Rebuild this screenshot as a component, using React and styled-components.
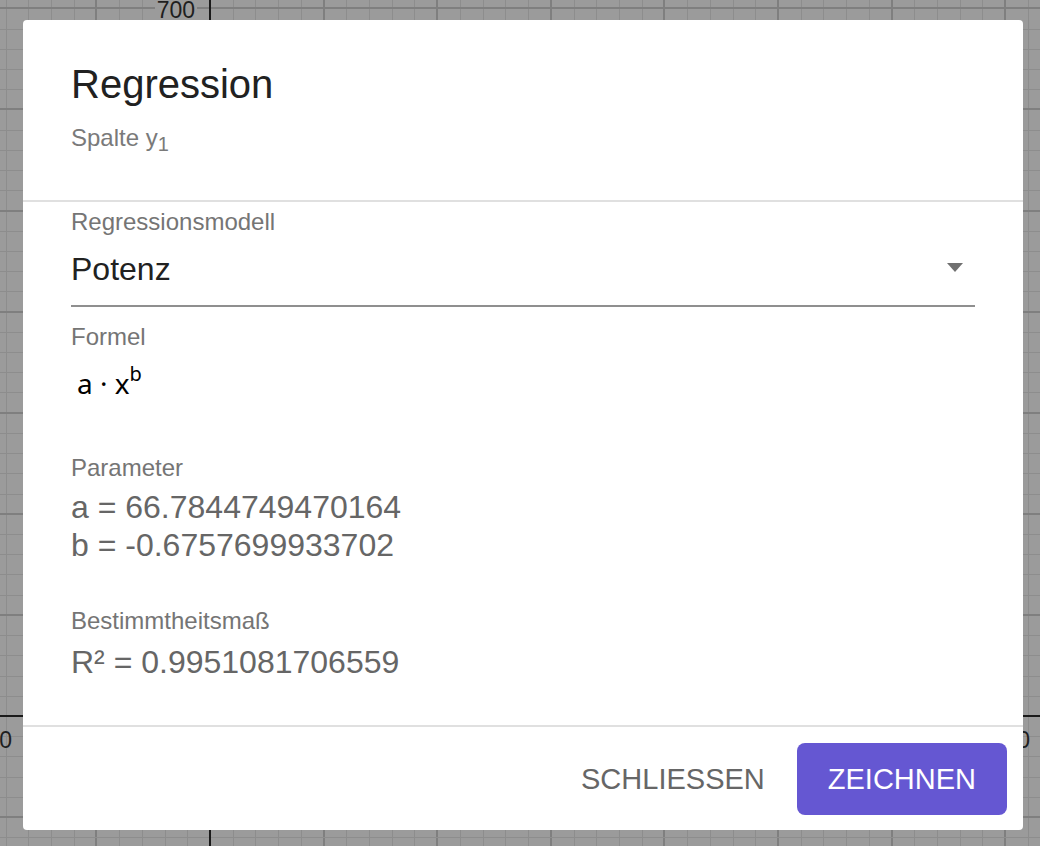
import React from "react";
import styled, { createGlobalStyle } from "styled-components";

const GlobalStyle = createGlobalStyle`
  *, *::before, *::after { box-sizing: border-box; }
  html, body { margin: 0; padding: 0; }
  body {
    font-family: "Liberation Sans", Arial, sans-serif;
    background: #9b9b9b;
  }
`;

const Stage = styled.div`
  position: relative;
  width: 1040px;
  height: 846px;
  overflow: hidden;
  background: #9b9b9b;
`;

const GraphSvg = styled.svg`
  display: block;
  width: 1040px;
  height: 846px;
`;

const Backdrop = styled.div`
  position: absolute;
  inset: 0;
  display: flex;
  align-items: flex-start;
  padding: 20px 17px 16px 23px;
`;

const Dialog = styled.div`
  width: 1000px;
  background: #ffffff;
  border-radius: 4px;
  display: flex;
  flex-direction: column;
`;

const Header = styled.div`
  padding: 40px 48px 46px;
  border-bottom: 2px solid #e0e0e0;
`;

const Title = styled.h1`
  margin: 0;
  font-size: 40px;
  line-height: 48px;
  font-weight: 400;
  color: #212121;
`;

const Subtitle = styled.div`
  margin-top: 14px;
  font-size: 24px;
  line-height: 32px;
  color: #7a7a7a;
`;

const Sub = styled.sub`
  font-size: 20px;
  line-height: 0;
  vertical-align: -5px;
`;

const Content = styled.div`
  padding: 4px 48px 44px;
  border-bottom: 2px solid #e0e0e0;
  display: flex;
  flex-direction: column;
`;

const Label = styled.div`
  margin-top: ${(p) => p.$gap || 0}px;
  font-size: 24px;
  line-height: 32px;
  color: #757575;
`;

const SelectBox = styled.div`
  display: flex;
  align-items: center;
  justify-content: space-between;
  padding: 11px 12px 16px 0;
  border-bottom: 2px solid #8f8f8f;
  cursor: pointer;
`;

const SelectValue = styled.span`
  font-size: 32px;
  line-height: 40px;
  color: #212121;
`;

const Caret = styled.svg`
  display: block;
  margin-bottom: 3px;
`;

const Formula = styled.div`
  height: 99px;
  padding: 10px 0 0 6px;
  font-family: "Noto Sans", "Open Sans", sans-serif;
  font-size: 28px;
  line-height: 40px;
  color: #000000;
  white-space: pre;
`;

const Sup = styled.sup`
  font-size: 20px;
  line-height: 1;
  vertical-align: 13px;
`;

const Values = styled.div`
  margin-top: ${(p) => p.$gap || 0}px;
  font-size: 32px;
  line-height: 38px;
  color: #666666;
`;

const Footer = styled.div`
  display: flex;
  justify-content: flex-end;
  align-items: center;
  gap: 1px;
  padding: 16px 16px 15px;
`;

const Button = styled.button`
  height: 72px;
  padding: 0 31px;
  border: none;
  border-radius: 8px;
  font-family: "Liberation Sans", Arial, sans-serif;
  font-size: 29px;
  text-transform: uppercase;
  cursor: pointer;
  background: ${(p) => (p.$primary ? "#6557d2" : "transparent")};
  color: ${(p) => (p.$primary ? "#ffffff" : "#666666")};
`;

const BG = "#9b9b9b";
const MINOR = "#8d8d8d";
const MAJOR = "#7f7f7f";
const AXIS = "#1a1a1a";

function Graph() {
  const ax = 210;
  const ay = 716;
  const dx = 22.72;
  const dy = 20.22;
  const lines = [];
  for (let k = -10; k <= 37; k++) {
    if (k === 0) continue;
    const major = k % 5 === 0;
    const x = Math.round(ax + k * dx) + (major ? 0 : 0.5);
    lines.push(
      <line
        key={"v" + k}
        x1={x}
        x2={x}
        y1={0}
        y2={846}
        stroke={major ? MAJOR : MINOR}
        strokeWidth={major ? 2 : 1}
      />
    );
  }
  for (let k = -7; k <= 36; k++) {
    if (k === 0) continue;
    const major = k % 5 === 0;
    const y = Math.round(ay - k * dy) + (major ? 0 : 0.5);
    lines.push(
      <line
        key={"h" + k}
        x1={0}
        x2={1040}
        y1={y}
        y2={y}
        stroke={major ? MAJOR : MINOR}
        strokeWidth={major ? 2 : 1}
      />
    );
  }
  return (
    <GraphSvg viewBox="0 0 1040 846" shapeRendering="crispEdges">
      <rect x="0" y="0" width="1040" height="846" fill={BG} />
      {lines}
      <line x1={0} x2={1040} y1={ay} y2={ay} stroke={AXIS} strokeWidth="2" />
      <line x1={ax} x2={ax} y1={0} y2={846} stroke={AXIS} strokeWidth="2" />
      <rect x="155" y="0" width="42" height="20" fill={BG} />
      <text
        x="195"
        y="18"
        textAnchor="end"
        fontFamily="Liberation Sans, Arial, sans-serif"
        fontSize="23"
        fill="#1f1f1f"
        shapeRendering="auto"
      >
        700
      </text>
      <text
        x="12"
        y="748"
        textAnchor="end"
        fontFamily="Liberation Sans, Arial, sans-serif"
        fontSize="23"
        fill="#1f1f1f"
      >
        -200
      </text>
      <text
        x="1030"
        y="748"
        textAnchor="end"
        fontFamily="Liberation Sans, Arial, sans-serif"
        fontSize="23"
        fill="#1f1f1f"
      >
        1400
      </text>
    </GraphSvg>
  );
}

export default function App() {
  return (
    <>
      <GlobalStyle />
      <Stage>
        <Graph />
        <Backdrop>
          <Dialog role="dialog">
            <Header>
              <Title>Regression</Title>
              <Subtitle>
                Spalte y<Sub>1</Sub>
              </Subtitle>
            </Header>
            <Content>
              <Label>Regressionsmodell</Label>
              <SelectBox>
                <SelectValue>Potenz</SelectValue>
                <Caret width="16" height="9" viewBox="0 0 16 9">
                  <path d="M0 0 L16 0 L8 9 Z" fill="#707070" />
                </Caret>
              </SelectBox>
              <Label $gap={14}>Formel</Label>
              <Formula>
                {"a · x"}
                <Sup>b</Sup>
              </Formula>
              <Label>Parameter</Label>
              <Values $gap={4}>
                a = 66.7844749470164
                <br />
                b = -0.6757699933702
              </Values>
              <Label $gap={41}>Bestimmtheitsmaß</Label>
              <Values $gap={6}>R² = 0.9951081706559</Values>
            </Content>
            <Footer>
              <Button>Schliessen</Button>
              <Button $primary>Zeichnen</Button>
            </Footer>
          </Dialog>
        </Backdrop>
      </Stage>
    </>
  );
}
